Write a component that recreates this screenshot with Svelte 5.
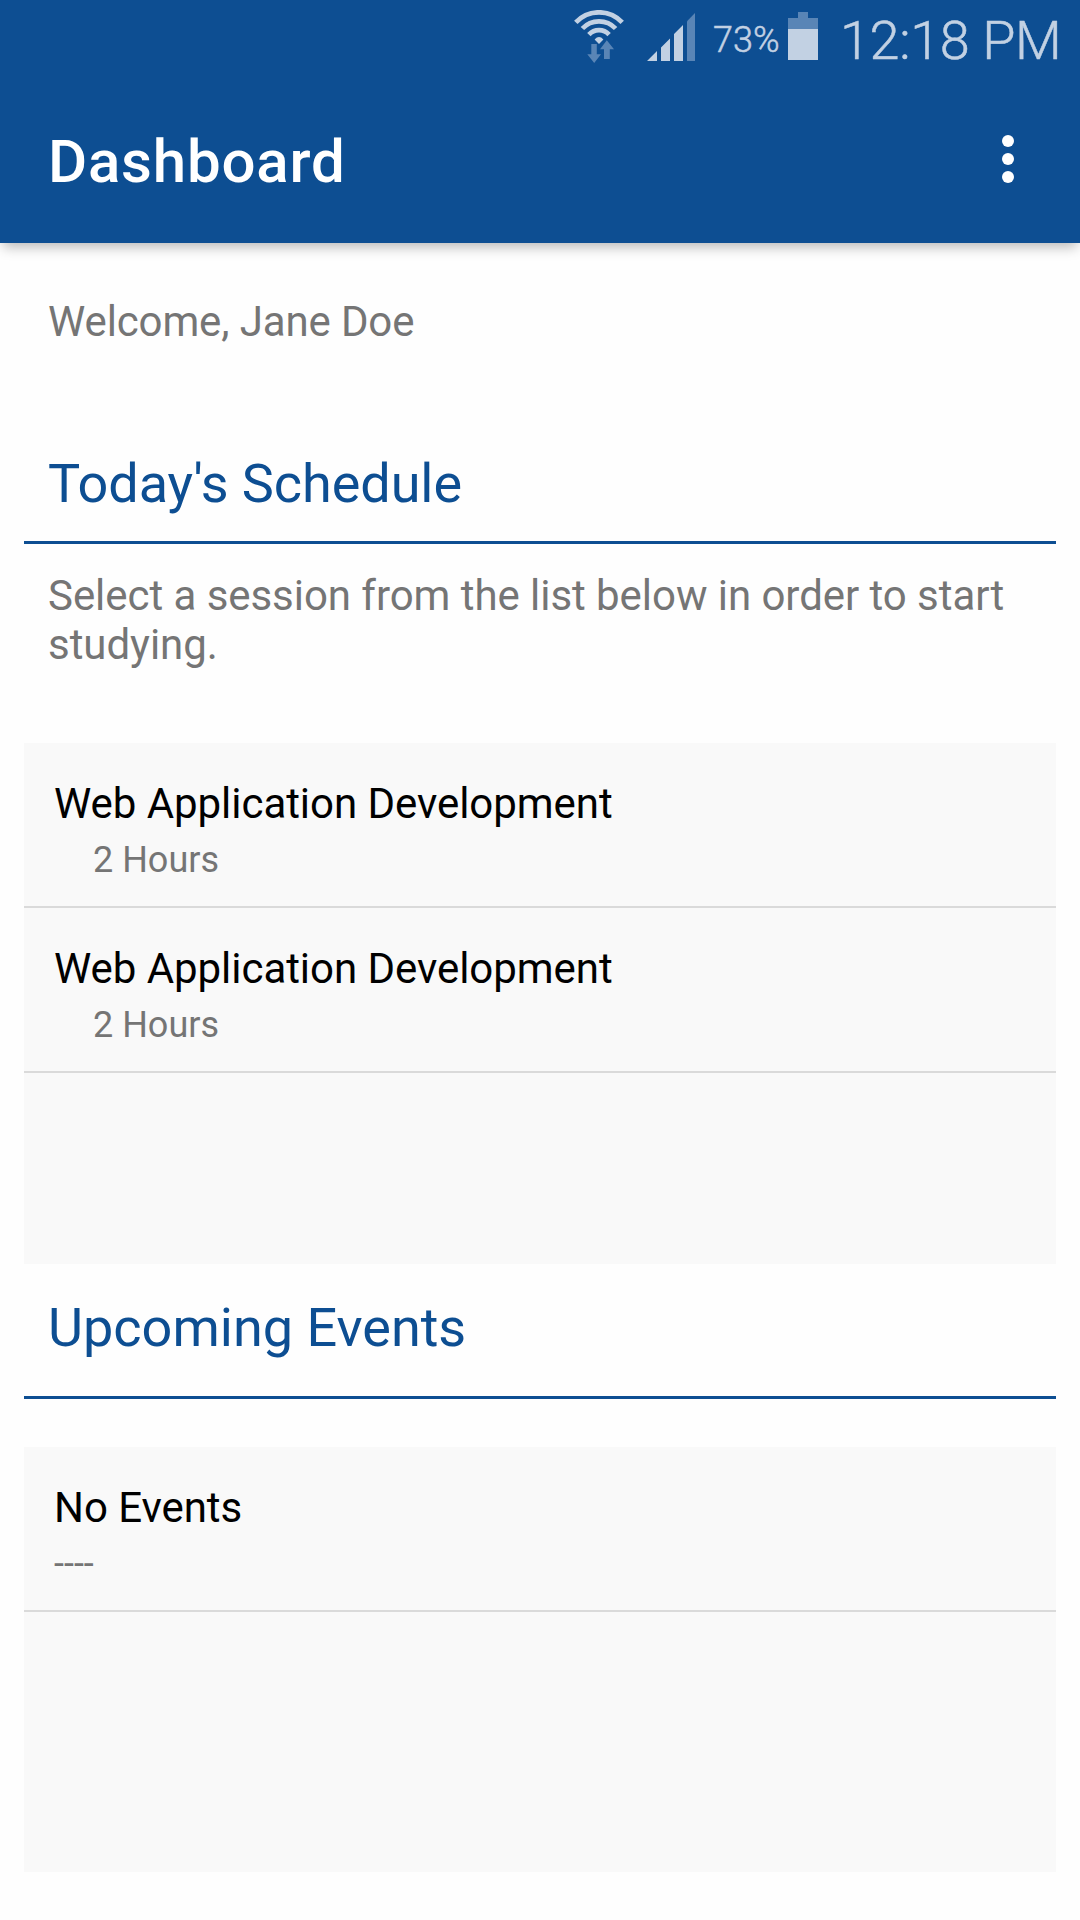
<script>
  const sessions = [
    { title: 'Web Application Development', detail: '2 Hours' },
    { title: 'Web Application Development', detail: '2 Hours' }
  ];
  const events = [{ title: 'No Events', detail: '----' }];
</script>

<div class="screen">
  <header>
    <div class="status">
      <svg class="wifi" width="52" height="54" viewBox="573 10 52 54" aria-hidden="true">
        <g fill="none" stroke="#c2d1e3" stroke-width="4.7">
          <path d="M575.8 22.4A31.7 31.7 0 0 1 622.2 22.4" />
          <path d="M582.4 28.5A22.7 22.7 0 0 1 615.6 28.5" />
          <path d="M588.9 34.6A13.8 13.8 0 0 1 609.1 34.6" />
        </g>
        <path fill="#c2d1e3" d="M599 44L594.6 39.4Q599 34.6 603.4 39.4Z" />
        <path fill="#5985b6" d="M591.3 44H596.8V54.3H601L594.2 63L587.3 54.3H591.3Z" />
        <path fill="#5985b6" d="M606.8 40.3L614 49.3H609.8V59H604V49.3H600Z" />
      </svg>
      <svg class="signal" width="48" height="50" viewBox="647 12 48 50" aria-hidden="true">
        <path fill="#c2d1e3" d="M647 61L657 51V61ZM661 61V47.5L670 38.5V61ZM674 61V34L683 25V61Z" />
        <path fill="#5985b6" d="M687 61V21.3L695 13V61Z" />
      </svg>
      <span class="percent">73%</span>
      <svg class="battery" width="30" height="48" viewBox="788 12 30 48" aria-hidden="true">
        <path fill="#5985b6" d="M798 12H808V18H818V29H788V18H798Z" />
        <path fill="#c2d1e3" d="M788 29H818V60H788Z" />
      </svg>
      <time>12:18 PM</time>
    </div>
    <div class="toolbar">
      <h1>Dashboard</h1>
      <button aria-label="More options"><i></i><i></i><i></i></button>
    </div>
  </header>

  <main>
    <p class="welcome">Welcome, Jane Doe</p>
    <h2>Today's Schedule</h2>
    <p class="hint">Select a session from the list below in order to start studying.</p>
    <ul class="sessions">
      {#each sessions as s}
        <li><strong>{s.title}</strong><span class="indent">{s.detail}</span></li>
      {/each}
    </ul>
    <h2 class="upcoming">Upcoming Events</h2>
    <ul class="events">
      {#each events as e}
        <li><strong>{e.title}</strong><span>{e.detail}</span></li>
      {/each}
    </ul>
  </main>
</div>

<style>
  :global(body) { margin: 0; background: #fff; }
  .screen {
    width: 1080px;
    height: 1920px;
    overflow: hidden;
    background: #fefefe;
    font-family: Roboto, sans-serif;
    color: #757575;
  }
  header {
    height: 243px;
    background: #0d4e92;
    box-shadow: 0 7px 12px -3px rgba(0, 0, 0, 0.28);
  }
  .status {
    height: 75px;
    box-sizing: border-box;
    padding: 10px 19px 0 0;
    display: flex;
    justify-content: flex-end;
    align-items: flex-start;
    color: #c2d1e3;
    white-space: nowrap;
  }
  svg { display: block; flex: none; }
  .wifi { margin-right: 22px; }
  .signal { margin: 2px 18px 0 0; }
  .battery { margin: 2px 20px 0 0; }
  .percent, time {
    font-weight: 300;
    -webkit-text-stroke: 0.5px #c2d1e3;
  }
  .percent {
    width: 75px;
    margin-top: 9px;
    font-size: 36px;
    line-height: 42px;
  }
  time {
    width: 223px;
    margin-top: -1px;
    font-size: 54px;
    letter-spacing: -0.35px;
    text-indent: 2px;
    line-height: 63px;
  }
  .toolbar {
    height: 168px;
    padding: 0 66px 0 48px;
    box-sizing: border-box;
    display: flex;
    justify-content: space-between;
    align-items: center;
  }
  h1 {
    margin: 5px 0 0;
    font-size: 60px;
    font-weight: 500;
    letter-spacing: 0.8px;
    line-height: 70px;
    color: #fff;
  }
  button {
    display: flex;
    flex-direction: column;
    gap: 6px;
    padding: 0;
    border: 0;
    background: none;
  }
  i { width: 12px; height: 12px; border-radius: 50%; background: #fff; }
  main { padding: 54px 24px 0; }
  p { margin: 0; padding: 0 24px; font-size: 42px; line-height: 49px; letter-spacing: -0.05px; }
  .welcome { margin-bottom: 106px; letter-spacing: -0.13px; }
  h2 {
    margin: 0;
    padding: 0 24px 26px;
    border-bottom: 3px solid #0d4e92;
    font-size: 54px;
    font-weight: 400;
    letter-spacing: -0.07px;
    line-height: 63px;
    color: #0d4e92;
  }
  .hint { padding-top: 27px; padding-bottom: 74px; }
  .upcoming { padding-top: 32px; padding-bottom: 37px; margin-bottom: 48px; letter-spacing: 0; }
  ul { margin: 0; padding: 0; list-style: none; background: #f9f9f9; }
  .sessions { height: 521px; }
  .events { height: 425px; }
  li {
    height: 127px;
    padding: 36px 30px 0;
    border-bottom: 2px solid #dadada;
    display: flex;
    flex-direction: column;
  }
  strong { font-size: 42px; font-weight: 400; line-height: 49px; letter-spacing: -0.05px; color: #000; }
  li span { margin-top: 11px; font-size: 36px; line-height: 42px; }
  .indent { padding-left: 39px; }
</style>
